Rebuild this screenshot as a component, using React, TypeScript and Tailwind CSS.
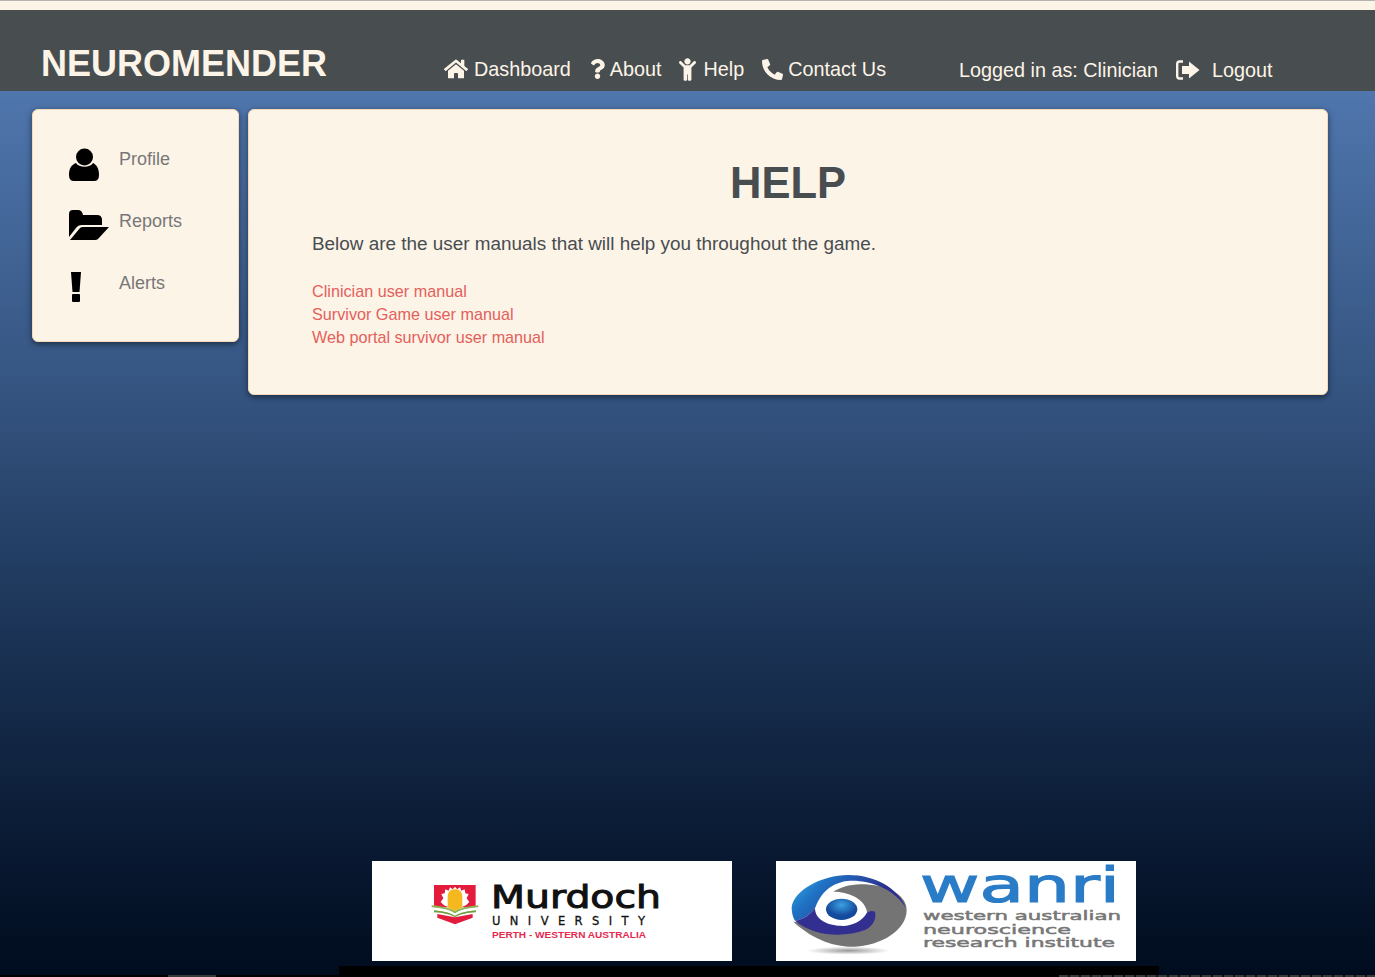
import { FaChild, FaHome, FaPhoneAlt, FaQuestion } from 'react-icons/fa'

const sans = { fontFamily: '"Liberation Sans", Arial, sans-serif' }

function LogoutIcon() {
  return (
    <svg width="24" height="20" viewBox="0 0 24 20" fill="none">
      <path d="M7 1.5H3.5Q1.2 1.5 1.2 4V16Q1.2 18.5 3.5 18.5H7" stroke="currentColor" strokeWidth="2.4" />
      <path d="M6 6H13V1.5L23.5 10L13 18.5V14H6Z" fill="currentColor" />
    </svg>
  )
}

function UserIcon() {
  return (
    <svg width="30" height="33" viewBox="0 0 30 33" fill="black">
      <circle cx="15.5" cy="9" r="8.5" />
      <path d="M0 27C0 21 2 17 7 15C10 20 21 20 24 15C28 17 30 21 30 27Q30 33 25 33H5Q0 33 0 27Z" />
    </svg>
  )
}

function FolderIcon() {
  return (
    <svg width="40" height="30" viewBox="0 0 40 30" fill="black">
      <path d="M0 4Q0 0 4 0H9Q13 0 14 5H28Q33 5 33 10V15H13Q9 15 7 18L0 27Z" />
      <path d="M1 30L11 18Q12 17 14 17H40L29 29Q28 30 26 30Z" />
    </svg>
  )
}

function AlertIcon() {
  return (
    <svg width="10" height="30" viewBox="0 0 10 30" fill="black">
      <path d="M0 0H10L8.5 20H1.5Z" />
      <rect x="1" y="22" width="8" height="8" rx="1" />
    </svg>
  )
}

function MurdochLogo() {
  return (
    <svg width="360" height="100" viewBox="0 0 360 100">
      <g transform="translate(-12 -11) scale(0.3333)">
        <path d="M222 105H347V172H222Z" fill="#e31b3c" />
        <path d="M232 192L285 202L338 192V203L285 223L232 203Z" fill="#e31b3c" />
        <path d="M285 110L292 118L300 112L304 122L314 118L316 130L326 132L320 145L328 156L318 166L285 180L252 166L242 156L250 145L244 132L254 130L256 118L266 122L270 112L278 118Z" fill="#fff" />
        <path d="M263 142C263 125 272 118 285 118C298 118 307 125 307 142V172L285 184L263 172Z" fill="#f5b81f" />
        <path d="M215 166C240 168 268 172 285 184C302 172 330 168 355 166V172C330 174 302 178 285 191C268 178 240 174 215 172Z" fill="#8db556" />
        <path d="M218 173C242 175 268 179 285 191C302 179 328 175 352 173V184C328 184 302 188 285 199C268 188 242 184 218 184Z" fill="#fff" />
        <path d="M222 181C244 183 268 187 285 197C302 187 326 183 348 181V187C326 188 302 192 285 202C268 192 244 188 222 187Z" fill="#6f9e3f" />
      </g>
      <text x="119" y="47" fontFamily="DejaVu Sans, sans-serif" fontSize="32" fill="#111" stroke="#111" strokeWidth="1" textLength="170" lengthAdjust="spacingAndGlyphs">Murdoch</text>
      <text x="120" y="64" fontFamily="DejaVu Sans, sans-serif" fontSize="11.5" fill="#111" stroke="#111" strokeWidth="0.3" textLength="153">UNIVERSITY</text>
      <text x="120" y="77" fontFamily="Liberation Sans, sans-serif" fontWeight="700" fontSize="9.5" fill="#e62a4f" textLength="154" lengthAdjust="spacingAndGlyphs">PERTH - WESTERN AUSTRALIA</text>
    </svg>
  )
}

function WanriLogo() {
  return (
    <svg width="360" height="100" viewBox="0 0 360 100">
      <defs>
        <radialGradient id="shadow">
          <stop offset="0" stopColor="#999" />
          <stop offset="1" stopColor="#fff" />
        </radialGradient>
        <linearGradient id="blue" x1="0" y1="0" x2="1" y2="0.4">
          <stop offset="0" stopColor="#35b4ea" />
          <stop offset="0.3" stopColor="#1f73c4" />
          <stop offset="0.8" stopColor="#2b2f8f" />
        </linearGradient>
        <radialGradient id="dome" cy="0.3">
          <stop offset="0" stopColor="#3aa0e0" />
          <stop offset="1" stopColor="#144a9c" />
        </radialGradient>
      </defs>
      <g transform="translate(-11 -11) scale(0.3333)">
        <ellipse cx="250" cy="302" rx="125" ry="12" fill="url(#shadow)" />
        <path d="M205 125C250 125 295 145 305 180C306 186 306 188 305 190L300 240L85 215C150 275 220 292 270 290C350 286 425 240 425 180C425 140 380 108 300 103C260 100 225 112 205 125Z" fill="#747474" />
        <path d="M80 172C85 122 170 75 250 75C330 75 400 115 422 172C390 120 320 90 255 92C200 95 165 130 150 175C130 200 110 210 90 212C82 200 80 185 80 172Z" fill="url(#blue)" />
        <path d="M90 212C150 262 240 262 300 240C325 228 335 205 330 185C318 180 310 185 305 190C290 215 260 228 235 228C190 228 150 210 150 175C130 200 110 210 90 212Z" fill="#322f91" />
        <ellipse cx="230" cy="178" rx="47" ry="32" fill="url(#dome)" />
      </g>
      <text x="144" y="41" fontFamily="DejaVu Sans, sans-serif" fontSize="48" fill="#2a7cc7" stroke="#2a7cc7" strokeWidth="1.2" textLength="200" lengthAdjust="spacingAndGlyphs">wanri</text>
      <text x="147" y="59" fontFamily="DejaVu Sans, sans-serif" fontSize="13" fill="#777" stroke="#777" strokeWidth="0.5" textLength="198" lengthAdjust="spacingAndGlyphs">western australian</text>
      <text x="147" y="72.5" fontFamily="DejaVu Sans, sans-serif" fontSize="13" fill="#777" stroke="#777" strokeWidth="0.5" textLength="148" lengthAdjust="spacingAndGlyphs">neuroscience</text>
      <text x="147" y="86" fontFamily="DejaVu Sans, sans-serif" fontSize="13" fill="#777" stroke="#777" strokeWidth="0.5" textLength="192" lengthAdjust="spacingAndGlyphs">research institute</text>
    </svg>
  )
}

const sideItems = [
  { label: 'Profile', icon: <UserIcon />, colClass: 'w-[50px]' },
  { label: 'Reports', icon: <FolderIcon />, colClass: 'w-[50px]' },
  { label: 'Alerts', icon: <AlertIcon />, colClass: 'w-[48px] ml-[2px]' },
]

export default function App() {
  return (
    <div
      style={sans}
      className="relative flex min-h-[977px] flex-col overflow-hidden bg-[linear-gradient(to_bottom,#5079b2_0px,#4f76ad_91px,#34537f_400px,#1c3558_620px,#0a1a33_840px,#000c1e_977px)]"
    >
      {/* Franja superior */}
      <div className="h-[10px] border-t border-[#b5b3b1] bg-[#fdf4e8]" />

      {/* Cabecera */}
      <header className="flex h-[81px] bg-[#484d50] text-[#fdf4e8]">
        <div className="ml-[41px] mt-[32px] w-[403px] text-[36px] font-bold leading-[44px]">NEUROMENDER</div>
        <nav className="mt-[46px] flex h-[26px] items-center text-[19.8px] leading-[26px]">
          <a className="flex items-center">
            <FaHome className="mr-[6px] h-[24px] w-[24px]" />
            Dashboard
          </a>
          <a className="ml-[19px] flex items-center">
            <FaQuestion className="mr-[5px] h-[20px] w-[15px]" />
            About
          </a>
          <a className="ml-[18px] flex items-center">
            <FaChild className="mr-[7px] h-[23px] w-[17px]" />
            Help
          </a>
          <a className="ml-[18px] flex items-center">
            <FaPhoneAlt className="mr-[5px] h-[21px] w-[21px]" />
            Contact Us
          </a>
        </nav>
        <div className="ml-[73px] mt-[47px] flex h-[26px] items-center text-[19.8px] leading-[26px]">
          <span>Logged in as: Clinician</span>
          <span className="ml-[18px]">
            <LogoutIcon />
          </span>
          <span className="ml-[12px]">Logout</span>
        </div>
      </header>

      {/* Contenido */}
      <main className="flex items-start gap-[9px] pl-[32px] pt-[18px]">
        <aside className="h-[233px] w-[207px] rounded-[6px] border border-[#f5d9b8] bg-[#fdf4e8] pl-[36px] pt-[27px] shadow-[0_2px_6px_rgba(0,0,0,0.5)]">
          {sideItems.map((item) => (
            <div key={item.label} className="flex h-[62px]">
              <div className={`mt-[11px] ${item.colClass}`}>{item.icon}</div>
              <a className="mt-[10px] text-[18px] leading-[24px] text-[#777]">{item.label}</a>
            </div>
          ))}
        </aside>

        <section className="h-[286px] w-[1080px] rounded-[6px] border border-[#f5d9b8] bg-[#fdf4e8] px-[63px] pt-[48px] shadow-[0_2px_6px_rgba(0,0,0,0.5)]">
          <h1 className="text-center text-[43.5px] font-bold leading-[50px] text-[#484d50]">HELP</h1>
          <p className="mt-[23px] text-[18.9px] leading-[26px] text-[#484d50]">
            Below are the user manuals that will help you throughout the game.
          </p>
          <div className="mt-[23px] flex flex-col text-[16.2px] leading-[23px] text-[#e4605a]">
            <a>Clinician user manual</a>
            <a>Survivor Game user manual</a>
            <a>Web portal survivor user manual</a>
          </div>
        </section>
      </main>

      {/* Pie con logos */}
      <footer className="mt-auto">
        <div className="ml-[372px] flex gap-[44px]">
          <div className="h-[100px] w-[360px] bg-white">
            <MurdochLogo />
          </div>
          <div className="h-[100px] w-[360px] bg-white">
            <WanriLogo />
          </div>
        </div>
        <div className="ml-[339px] mt-[5px] h-[9px] w-[820px] bg-black" />
        <div className="flex h-[2px] bg-black">
          <div className="ml-[168px] w-[48px] bg-[#3a3a3a]" />
          <div className="ml-[843px] grow bg-[repeating-linear-gradient(to_right,#3a3a3a_0px,#3a3a3a_9px,#111_9px,#111_11px)]" />
        </div>
      </footer>
    </div>
  )
}
